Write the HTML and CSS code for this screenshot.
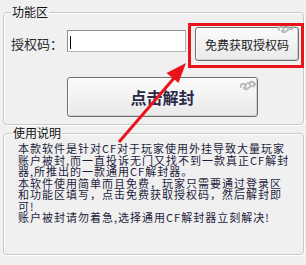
FILE: index.html
```html
<!DOCTYPE html>
<html lang="zh-CN">
<head>
<meta charset="UTF-8">
<title>CF解封器</title>
<link rel="stylesheet" href="styles.css">
</head>
<body>

<!-- 功能区 -->
<fieldset class="group group-func">
    <legend>功能区</legend>
    <div class="row">
        <label class="field-label">授权码：</label>
        <div class="field"><span class="caret"></span></div>
        <button class="btn btn-free">免费获取授权码
            <svg class="swirl" viewBox="0 0 18 12"><path d="M2 8a2.5 2.5 0 1 1 3.5 1.5M5 9c1 2 4 2 5 0a2.5 2.5 0 1 0-3-3M11 5a2.5 2.5 0 1 1 3 2.5M14 7.5c1.5 0 3-1 3-3"/></svg>
        </button>
    </div>
    <div class="row row-unlock">
        <button class="btn btn-unlock">点击解封
            <svg class="swirl" viewBox="0 0 18 12"><path d="M2 8a2.5 2.5 0 1 1 3.5 1.5M5 9c1 2 4 2 5 0a2.5 2.5 0 1 0-3-3M11 5a2.5 2.5 0 1 1 3 2.5M14 7.5c1.5 0 3-1 3-3"/></svg>
        </button>
    </div>
</fieldset>

<!-- 使用说明 -->
<fieldset class="group group-help">
    <legend>使用说明</legend>
    <p class="help">本款软件是针对CF对于玩家使用外挂导致大量玩家<br>账户被封,而一直投诉无门又找不到一款真正CF解封<br>器,所推出的一款通用CF解封器。<br>本软件使用简单而且免费，玩家只需要通过登录区<br>和功能区填写，点击免费获取授权码，然后解封即<br>可!<br>账户被封请勿着急,选择通用CF解封器立刻解决!</p>
</fieldset>

<!-- 标注 -->
<div class="mark-box"></div>
<svg class="mark-arrow" viewBox="0 0 306 265">
    <line x1="119" y1="142" x2="175" y2="77"/>
    <polygon points="186,63 178.5,83 166.5,73"/>
</svg>

</body>
</html>
```

FILE: styles.css
```css
/* --- Base --- */
body {
    margin:0;
    width:306px;
    height:265px;
    background:#f0f0f0;
    font-family: "Noto Sans CJK SC", "Noto Sans", sans-serif;
    color:#222;
    position:relative;
    overflow:hidden;
}

/* --- Group boxes --- */
.group {
    margin:0 2px 0 3px;
    border:1px solid #c9c9c9;
    border-radius:4px;
    box-shadow: inset 1px 1px 0 #fff, 1px 1px 0 #fff;
    min-inline-size:0;
}
.group legend {
    font-size:12px;
    line-height:14px;
    padding:0 1px;
    color:#111;
}

.group-func {
    margin-top:5px;
    padding:8px 4px 7px 7px;
}

.group-help {
    margin-top:1px;
    padding:2px 8px 30px 14px;
}
.group-help legend { margin-left:-6px; }

/* --- Rows --- */
.row {
    display:flex;
    align-items:flex-start;
}
.row-unlock {
    margin-top:16px;
    padding-left:56px;
}

.field-label {
    width:56px;
    font-size:13px;
    line-height:34px;
    color:#2a2a2a;
}

.field {
    box-sizing:border-box;
    width:119px;
    height:22px;
    margin-top:3px;
    margin-right:9px;
    background:#fff;
    border:1px solid #8e8e8e;
    border-right-color:#b5b5b5;
    border-bottom-color:#b5b5b5;
}
.caret {
    display:block;
    width:1px;
    height:13px;
    margin:5px 0 0 2px;
    background:#000;
}

/* --- Buttons --- */
.btn {
    position:relative;
    box-sizing:border-box;
    padding:0;
    border:1px solid #6e6e6e;
    border-radius:3px;
    background:linear-gradient(#fbfbfb, #e9e9e9);
    box-shadow: inset 1px 1px 0 #fff, inset -1px -1px 0 #cfcfcf;
    font-family:inherit;
    cursor:pointer;
}
.btn-free {
    width:104px;
    height:34px;
    font-size:12px;
    color:#222;
}
.btn-unlock {
    width:191px;
    height:40px;
    font-size:16px;
    font-weight:bold;
    color:#2a2a48;
}

.swirl {
    position:absolute;
    width:17px;
    height:12px;
    fill:none;
    stroke:#b9b9b9;
    stroke-width:2;
    stroke-linecap:round;
}
.btn-free .swirl { top:-6px; right:4px; }
.btn-unlock .swirl { top:1px; right:1px; }

/* --- Help text --- */
.help {
    margin:0;
    padding-top:1px;
    font-size:11px;
    line-height:11.5px;
    letter-spacing:1px;
    color:#1e1e3c;
    white-space:nowrap;
}

/* --- Red annotation --- */
.mark-box {
    position:absolute;
    left:188px;
    top:23px;
    width:116px;
    height:45px;
    box-sizing:border-box;
    border:3px solid #e8141c;
}
.mark-arrow {
    position:absolute;
    left:0;
    top:0;
    width:306px;
    height:265px;
    pointer-events:none;
}
.mark-arrow line { stroke:#e8141c; stroke-width:3; }
.mark-arrow polygon { fill:#e8141c; }
```
